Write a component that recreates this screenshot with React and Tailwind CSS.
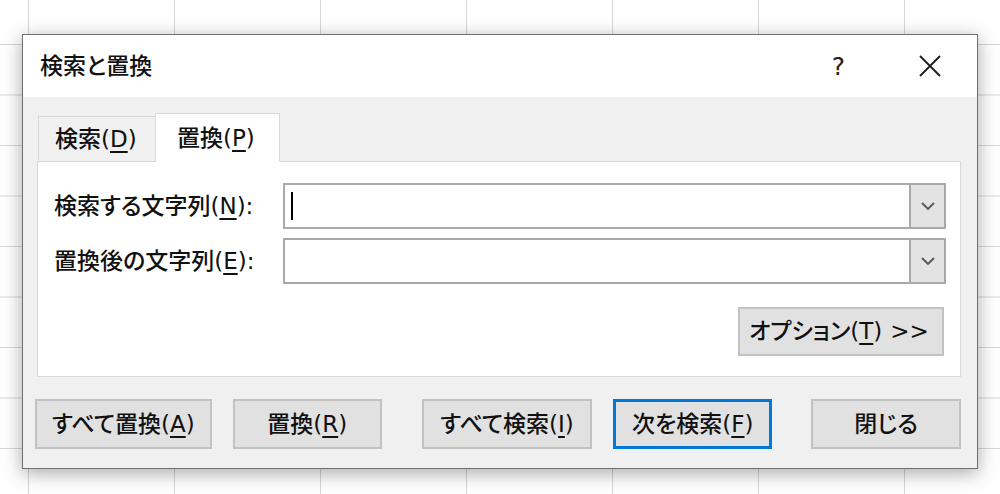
import React from 'react';

const font = "font-['DejaVu_Sans','Noto_Sans_CJK_JP',sans-serif]";

// 下線付きのアクセスキー
const Key = ({ children }) => (
  <span className="underline underline-offset-[4px] decoration-[1.5px]">{children}</span>
);

const Chevron = () => (
  <svg width="16" height="10" viewBox="0 0 16 10" fill="none">
    <path d="M2 2 L8 8 L14 2" stroke="#555" strokeWidth="1.8" />
  </svg>
);

const ComboBox = ({ caret }) => (
  <div className="flex h-[46px] flex-1 border-2 border-[#a9a9a9] bg-white">
    <div className="flex flex-1 items-center pl-[6px]">
      {caret && <div className="h-[28px] w-[2px] bg-black" />}
    </div>
    <div className="flex w-[35px] items-center justify-center border-l-2 border-[#a9a9a9] bg-[#e3e3e3]">
      <Chevron />
    </div>
  </div>
);

const Button = ({ children, width, primary }) => (
  <button
    className={
      primary
        ? 'flex h-[50px] items-center justify-center border-[3px] border-[#0078d7] bg-[#e1e1e1] text-[23px] leading-none'
        : 'flex h-[50px] items-center justify-center border-2 border-[#c2c2c2] bg-[#e1e1e1] text-[23px] leading-none'
    }
    style={{ width }}
  >
    {children}
  </button>
);

export default function App() {
  return (
    <div
      className={`${font} h-[494px] w-[1000px] overflow-hidden bg-white bg-[linear-gradient(to_right,#d6d6d6_1px,transparent_1px),linear-gradient(to_bottom,#d6d6d6_1px,transparent_1px)] bg-[size:146px_50.5px] bg-[position:28px_44px] pl-[22px] pt-[34px] font-medium text-[#111] [font-feature-settings:'palt']`}
    >
      {/* ダイアログ */}
      <div className="flex h-[435px] w-[956px] flex-col border border-[#6f6f6f] bg-[#f0f0f0] shadow-[0_4px_18px_rgba(0,0,0,0.35)]">
        {/* タイトルバー */}
        <div className="flex h-[62px] items-center bg-white pl-[17px] pr-[36px] text-[23px] leading-none">
          <span>検索と置換</span>
          <span className="ml-auto mr-[74px] text-[25px] font-normal text-[#222]">?</span>
          <svg width="22" height="22" viewBox="0 0 22 22">
            <path d="M1 1 L21 21 M21 1 L1 21" stroke="#222" strokeWidth="2" />
          </svg>
        </div>

        <div className="flex flex-1 flex-col pl-[14px] pr-[16px] pt-[16px]">
          {/* タブ */}
          <div className="flex h-[48px] items-end pl-[1px] text-[23px] leading-none">
            <div className="mb-[-1px] flex h-[46px] w-[117px] items-center border-l border-t border-[#d9d9d9] pl-[16px]">
              検索(<Key>D</Key>)
            </div>
            <div className="relative z-10 mb-[-1px] flex h-[49px] w-[125px] items-center border-l border-r border-t border-[#d9d9d9] bg-white pl-[21px]">
              置換(<Key>P</Key>)
            </div>
          </div>

          {/* パネル */}
          <div className="flex h-[216px] flex-col border border-[#d9d9d9] bg-white pl-[16px] pr-[14px] pt-[21px] text-[23px] leading-none">
            <div className="flex items-center">
              <div className="w-[229px]">
                検索する文字列(<Key>N</Key>):
              </div>
              <ComboBox caret />
            </div>
            <div className="mt-[9px] flex items-center">
              <div className="w-[229px]">
                置換後の文字列(<Key>E</Key>):
              </div>
              <ComboBox />
            </div>
            <div className="mt-[23px] flex justify-end pr-[2px]">
              <button className="flex h-[49px] w-[206px] items-center justify-center border-2 border-[#c2c2c2] bg-[#e1e1e1] pr-[4px] text-[23px] leading-none">
                オプション(<Key>T</Key>)
                <span className="ml-[8px]">&gt;&gt;</span>
              </button>
            </div>
          </div>

          {/* ボタン */}
          <div className="-ml-[2px] mt-[22px] flex items-center">
            <Button width={177}>
              すべて置換(<Key>A</Key>)
            </Button>
            <div className="w-[21px]" />
            <Button width={149}>
              置換(<Key>R</Key>)
            </Button>
            <div className="w-[40px]" />
            <Button width={171}>
              すべて検索(<Key>I</Key>)
            </Button>
            <div className="w-[21px]" />
            <Button width={159} primary>
              次を検索(<Key>F</Key>)
            </Button>
            <div className="w-[39px]" />
            <Button width={150}>閉じる</Button>
          </div>
        </div>
      </div>
    </div>
  );
}
